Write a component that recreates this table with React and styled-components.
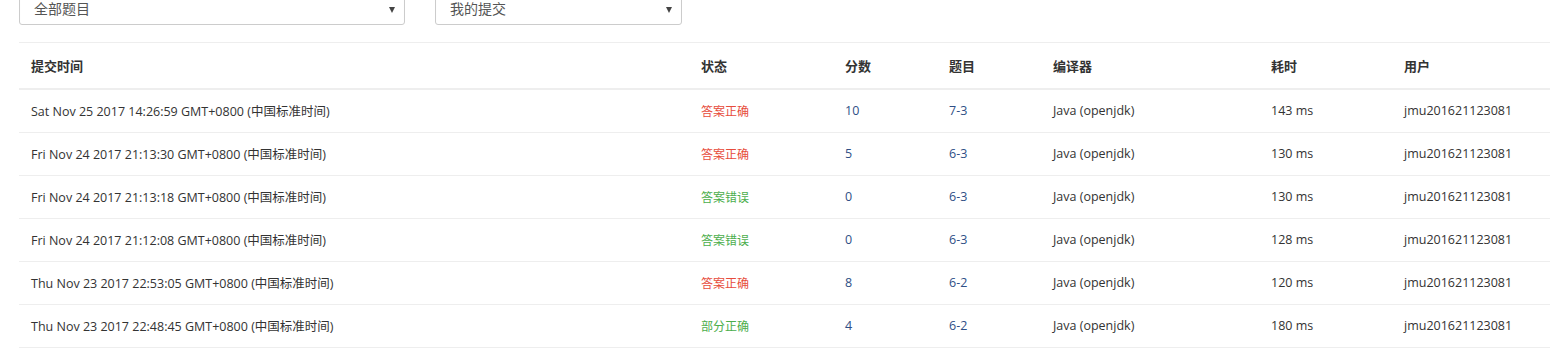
import React from "react";
import styled, { createGlobalStyle } from "styled-components";

const GlobalStyle = createGlobalStyle`
  html, body { margin: 0; padding: 0; background: #fff; }
  body {
    font-family: "Open Sans", "Noto Sans CJK SC", sans-serif;
    color: #333;
    overflow: hidden;
  }
`;

const Page = styled.div`
  padding: 0 0 0 19px;
`;

const Filters = styled.div`
  display: flex;
  gap: 30px;
  margin-top: -9px;
`;

const Select = styled.div`
  position: relative;
  box-sizing: border-box;
  width: ${(p) => p.width}px;
  height: 34px;
  border: 1px solid #ccc;
  border-radius: 3px;
  box-shadow: inset 0 1px 1px rgba(0, 0, 0, 0.05);
  padding: 0 24px 0 14px;
  display: flex;
  align-items: center;
  font-family: "Noto Sans CJK SC", sans-serif;
  font-size: 14px;
  color: #555;
`;

const Caret = styled.span`
  position: absolute;
  right: 9px;
  top: 15px;
  width: 0;
  height: 0;
  border-left: 3.5px solid transparent;
  border-right: 3.5px solid transparent;
  border-top: 6px solid #444;
`;

const Table = styled.table`
  margin-top: 17px;
  width: 1531px;
  table-layout: fixed;
  border-collapse: collapse;
  border-top: 1px solid #eee;
  font-size: 12.5px;
`;

const Th = styled.th`
  text-align: left;
  font-family: "Noto Sans CJK SC", sans-serif;
  font-weight: 700;
  font-size: 13px;
  color: #333;
  height: 46px;
  padding: 1px 12px 0;
  border-bottom: 2px solid #eee;
  width: ${(p) => p.w}px;
  box-sizing: border-box;
`;

const Td = styled.td`
  padding: 0 12px;
  height: 42px;
  border-bottom: 1px solid #eee;
  color: ${(p) => p.color || "#333"};
  font-family: ${(p) =>
    p.cjk ? '"Noto Sans CJK SC", sans-serif' : '"Open Sans", "Noto Sans CJK SC", sans-serif'};
  font-size: ${(p) => (p.cjk ? "12px" : "inherit")};
  white-space: nowrap;
`;

const statusColor = {
  答案正确: "#e74c3c",
  答案错误: "#4cae4c",
  部分正确: "#4cae4c",
};

const rows = [
  ["Sat Nov 25 2017 14:26:59 GMT+0800 (中国标准时间)", "答案正确", "10", "7-3", "143 ms"],
  ["Fri Nov 24 2017 21:13:30 GMT+0800 (中国标准时间)", "答案正确", "5", "6-3", "130 ms"],
  ["Fri Nov 24 2017 21:13:18 GMT+0800 (中国标准时间)", "答案错误", "0", "6-3", "130 ms"],
  ["Fri Nov 24 2017 21:12:08 GMT+0800 (中国标准时间)", "答案错误", "0", "6-3", "128 ms"],
  ["Thu Nov 23 2017 22:53:05 GMT+0800 (中国标准时间)", "答案正确", "8", "6-2", "120 ms"],
  ["Thu Nov 23 2017 22:48:45 GMT+0800 (中国标准时间)", "部分正确", "4", "6-2", "180 ms"],
];

const columns = [
  ["提交时间", 670],
  ["状态", 144],
  ["分数", 104],
  ["题目", 104],
  ["编译器", 218],
  ["耗时", 133],
  ["用户", 158],
];

export default function App() {
  return (
    <Page>
      <GlobalStyle />
      <Filters>
        <Select width={386}>
          全部题目
          <Caret />
        </Select>
        <Select width={247}>
          我的提交
          <Caret />
        </Select>
      </Filters>
      <Table>
        <thead>
          <tr>
            {columns.map(([name, w]) => (
              <Th key={name} w={w}>
                {name}
              </Th>
            ))}
          </tr>
        </thead>
        <tbody>
          {rows.map(([time, status, score, problem, cost], i) => (
            <tr key={i}>
              <Td>{time}</Td>
              <Td cjk color={statusColor[status]}>
                {status}
              </Td>
              <Td color="#2f4f86">{score}</Td>
              <Td color="#2f4f86">{problem}</Td>
              <Td>Java (openjdk)</Td>
              <Td>{cost}</Td>
              <Td>jmu201621123081</Td>
            </tr>
          ))}
        </tbody>
      </Table>
    </Page>
  );
}
